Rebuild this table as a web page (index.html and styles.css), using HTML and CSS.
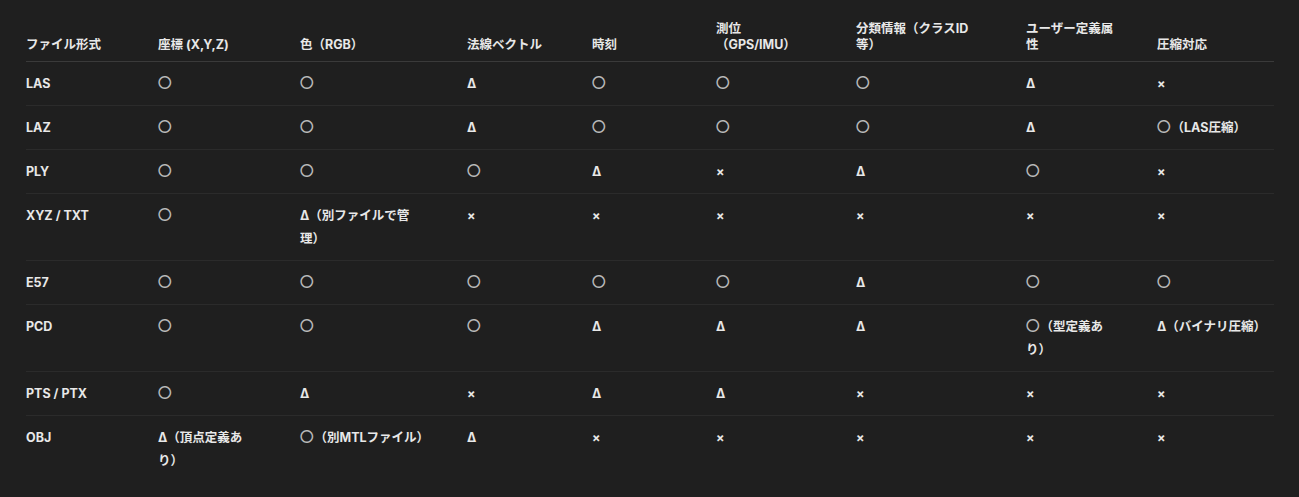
FILE: index.html
```html
<!DOCTYPE html>
<html lang="ja">
<head>
    <meta charset="UTF-8">
    <meta name="viewport" content="width=device-width, initial-scale=1.0">
    <title>点群ファイル形式の比較</title>
    <link rel="stylesheet" href="styles.css">
</head>
<body>
    <div class="container">
        <table class="format-table">
            <colgroup>
                <col style="width: 132px">
                <col style="width: 142px">
                <col style="width: 167px">
                <col style="width: 125px">
                <col style="width: 124px">
                <col style="width: 140px">
                <col style="width: 170px">
                <col style="width: 131px">
                <col style="width: 117px">
            </colgroup>
            <thead>
                <tr>
                    <th>ファイル形式</th>
                    <th>座標 (X,Y,Z)</th>
                    <th>色（RGB）</th>
                    <th>法線ベクトル</th>
                    <th>時刻</th>
                    <th>測位<br>（GPS/IMU）</th>
                    <th>分類情報（クラスID<br>等）</th>
                    <th>ユーザー定義属<br>性</th>
                    <th>圧縮対応</th>
                </tr>
            </thead>
            <tbody>
                <tr>
                    <td class="name">LAS</td>
                    <td><span class="ok">○</span></td>
                    <td><span class="ok">○</span></td>
                    <td>Δ</td>
                    <td><span class="ok">○</span></td>
                    <td><span class="ok">○</span></td>
                    <td><span class="ok">○</span></td>
                    <td>Δ</td>
                    <td>×</td>
                </tr>
                <tr>
                    <td class="name">LAZ</td>
                    <td><span class="ok">○</span></td>
                    <td><span class="ok">○</span></td>
                    <td>Δ</td>
                    <td><span class="ok">○</span></td>
                    <td><span class="ok">○</span></td>
                    <td><span class="ok">○</span></td>
                    <td>Δ</td>
                    <td><span class="ok">○</span>（LAS圧縮）</td>
                </tr>
                <tr>
                    <td class="name">PLY</td>
                    <td><span class="ok">○</span></td>
                    <td><span class="ok">○</span></td>
                    <td><span class="ok">○</span></td>
                    <td>Δ</td>
                    <td>×</td>
                    <td>Δ</td>
                    <td><span class="ok">○</span></td>
                    <td>×</td>
                </tr>
                <tr>
                    <td class="name">XYZ / TXT</td>
                    <td><span class="ok">○</span></td>
                    <td>Δ（別ファイルで管<br>理）</td>
                    <td>×</td>
                    <td>×</td>
                    <td>×</td>
                    <td>×</td>
                    <td>×</td>
                    <td>×</td>
                </tr>
                <tr>
                    <td class="name">E57</td>
                    <td><span class="ok">○</span></td>
                    <td><span class="ok">○</span></td>
                    <td><span class="ok">○</span></td>
                    <td><span class="ok">○</span></td>
                    <td><span class="ok">○</span></td>
                    <td>Δ</td>
                    <td><span class="ok">○</span></td>
                    <td><span class="ok">○</span></td>
                </tr>
                <tr>
                    <td class="name">PCD</td>
                    <td><span class="ok">○</span></td>
                    <td><span class="ok">○</span></td>
                    <td><span class="ok">○</span></td>
                    <td>Δ</td>
                    <td>Δ</td>
                    <td>Δ</td>
                    <td><span class="ok">○</span>（型定義あ<br>り）</td>
                    <td>Δ（バイナリ圧縮）</td>
                </tr>
                <tr>
                    <td class="name">PTS / PTX</td>
                    <td><span class="ok">○</span></td>
                    <td>Δ</td>
                    <td>×</td>
                    <td>Δ</td>
                    <td>Δ</td>
                    <td>×</td>
                    <td>×</td>
                    <td>×</td>
                </tr>
                <tr>
                    <td class="name">OBJ</td>
                    <td>Δ（頂点定義あ<br>り）</td>
                    <td><span class="ok">○</span>（別MTLファイル）</td>
                    <td>Δ</td>
                    <td>×</td>
                    <td>×</td>
                    <td>×</td>
                    <td>×</td>
                    <td>×</td>
                </tr>
            </tbody>
        </table>
    </div>
</body>
</html>
```

FILE: styles.css
```css
body {
    margin: 0;
    background-color: #1f1f1f;
    color: #e8e8e8;
    font-family: Inter, "Noto Sans CJK JP", sans-serif;
    font-size: 12.5px;
}

.container {
    padding: 13px 25px 0 26px;
}

.format-table {
    table-layout: fixed;
    width: 1248px;
    border-collapse: collapse;
}

th, td {
    text-align: left;
    font-weight: 700;
    white-space: nowrap;
    padding: 10px 12px 10px 0;
}

th {
    vertical-align: bottom;
    line-height: 16px;
    padding-top: 8px;
    padding-bottom: 8px;
    border-bottom: 1px solid #3a3a3a;
}

td {
    vertical-align: top;
    line-height: 23px;
    border-bottom: 1px solid #2b2b2b;
}

tbody tr:last-child td {
    border-bottom: none;
}

.ok {
    display: inline-block;
    vertical-align: top;
    height: 23px;
    line-height: 23px;
    margin-left: -1px;
    color: #b8b8b8;
    font-weight: 400;
    font-size: 17px;
}
```
